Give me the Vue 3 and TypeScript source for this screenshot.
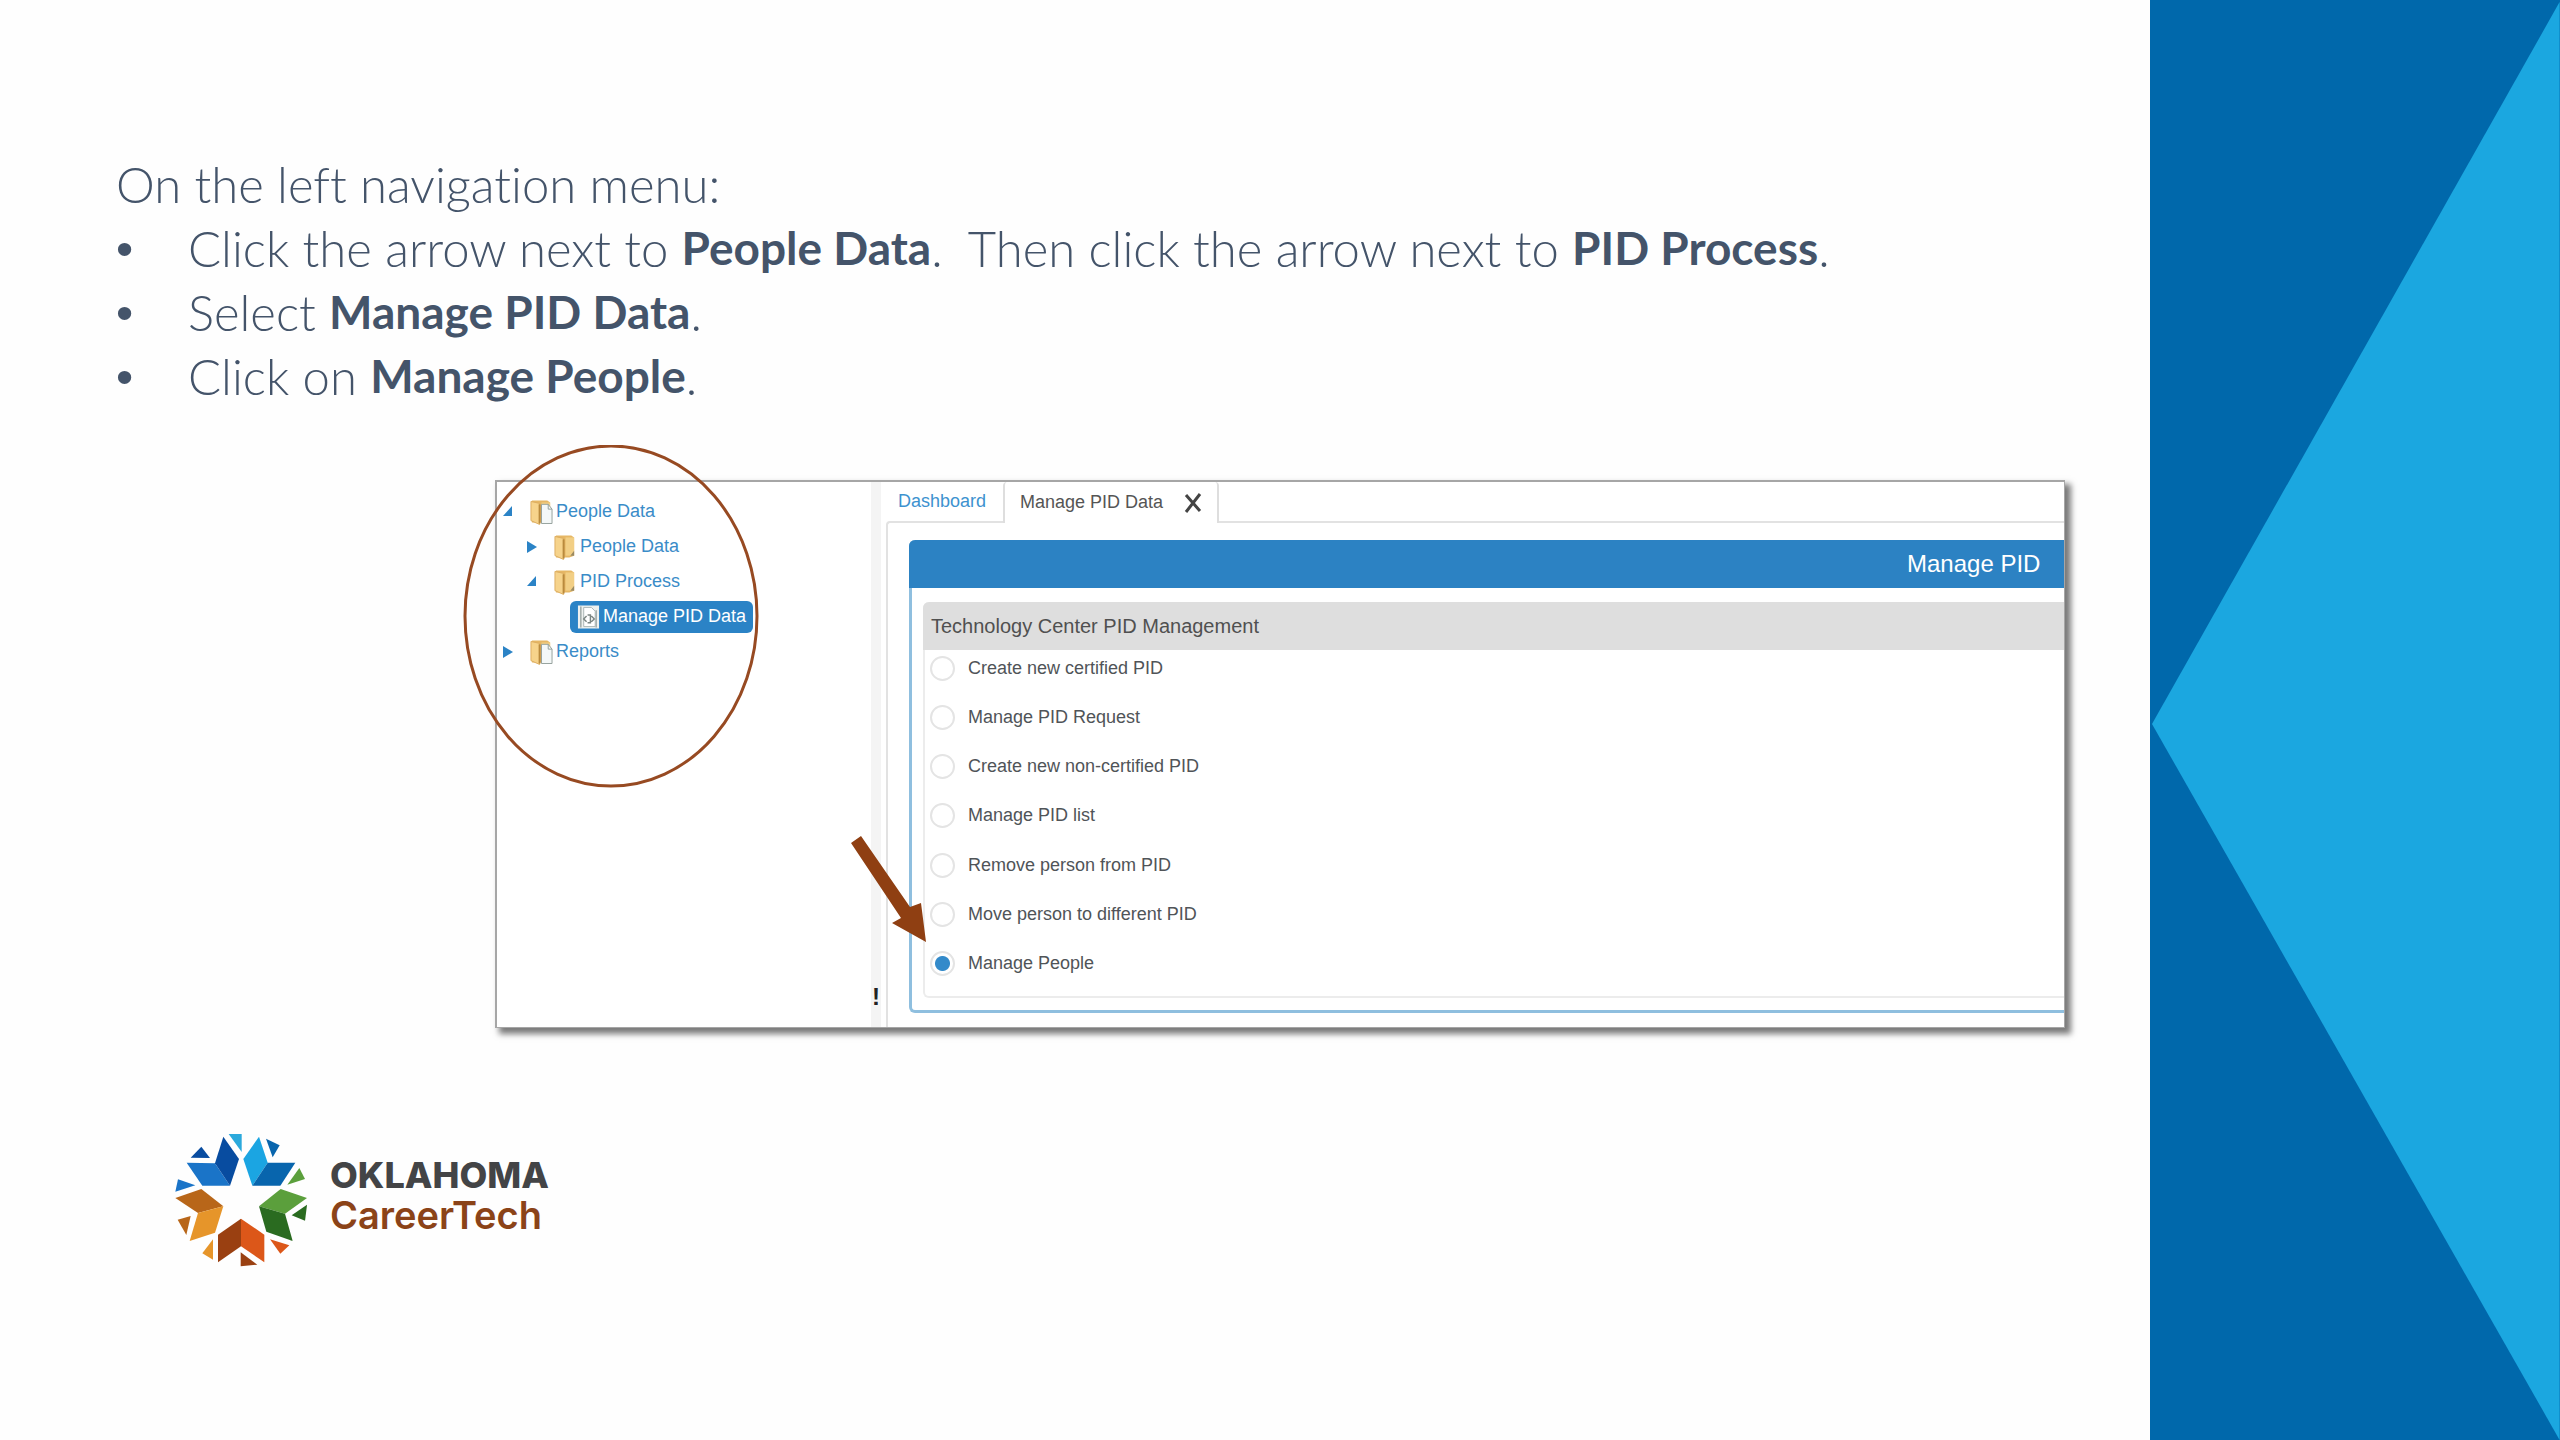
<script setup lang="ts">
import { ref } from 'vue'

interface TreeNode {
  label: string
  level: number
  icon: 'folderPage' | 'folder' | 'page'
  state: 'open' | 'closed' | 'leaf'
}

const nodes: TreeNode[] = [
  { label: 'People Data', level: 0, icon: 'folderPage', state: 'open' },
  { label: 'People Data', level: 1, icon: 'folder', state: 'closed' },
  { label: 'PID Process', level: 1, icon: 'folder', state: 'open' },
  { label: 'Manage PID Data', level: 2, icon: 'page', state: 'leaf' },
  { label: 'Reports', level: 0, icon: 'folderPage', state: 'closed' },
]

const options: string[] = [
  'Create new certified PID',
  'Manage PID Request',
  'Create new non-certified PID',
  'Manage PID list',
  'Remove person from PID',
  'Move person to different PID',
  'Manage People',
]

const selected = ref<string>('Manage People')
</script>

<template>
  <div class="slide">
    <main class="content">
      <section class="steps">
        <p>On the left navigation menu:</p>
        <ul>
          <li>Click the arrow next to <b>People Data</b>.&nbsp; Then click the arrow next to <b>PID Process</b>.</li>
          <li>Select <b>Manage PID Data</b>.</li>
          <li>Click on <b>Manage People</b>.</li>
        </ul>
      </section>

      <figure class="shot">
        <nav class="tree">
          <a
            v-for="(node, i) in nodes"
            :key="i"
            href="#"
            class="node"
            :class="['level-' + node.level, { active: node.state === 'leaf' }]"
          >
            <svg v-if="node.state !== 'leaf'" class="arrow" viewBox="0 0 10 12" aria-hidden="true">
              <path v-if="node.state === 'open'" d="M9 0V10H0Z" />
              <path v-else d="M0 0L10 6L0 12Z" />
            </svg>
            <span class="pill">
              <svg class="icon" viewBox="0 0 24 26" aria-hidden="true">
                <template v-if="node.icon === 'page'">
                  <rect x="1" y="1" width="22" height="24" fill="#eef1ef" />
                  <path d="M4 2V24M20 6V24" stroke="#9fa8a6" stroke-width="1.5" />
                  <path d="M7 3H15L19 7V23H7Z" fill="#fff" stroke="#a9b5b5" />
                  <path d="M10 12L7 15L10 18M15 12L18 15L15 18M11 11H14V19H11" fill="none" stroke="#7c8683" stroke-width="1.5" />
                </template>
                <template v-else>
                  <path d="M2 1H18L21 3V22L16 24H2Z" fill="#e6b765" />
                  <path d="M12 3H21V22H12Z" fill="#f2cf85" />
                  <path d="M1 2L10 4V26L1 22Z" fill="#f6d38b" stroke="#dcae60" />
                  <path d="M10 5V25" stroke="#b98a3d" stroke-width="2" />
                  <path v-if="node.icon === 'folder'" d="M17 22L21 17V22Z" fill="#9a8a62" />
                  <path v-else d="M12 5H19L23 10V25H12Z" fill="#f4f8f8" stroke="#93a09c" />
                  <path v-if="node.icon === 'folderPage'" d="M19 5V10H23" fill="none" stroke="#93a09c" />
                </template>
              </svg>
              <span>{{ node.label }}</span>
            </span>
          </a>
        </nav>

        <div class="splitter">!</div>

        <div class="workspace">
          <div class="tabs">
            <button type="button" class="tab">Dashboard</button>
            <button type="button" class="tab current">
              Manage PID Data
              <svg viewBox="0 0 18 20" aria-hidden="true">
                <path d="M2 2L16 18M16 1L2 19" stroke="#444" stroke-width="3" />
              </svg>
            </button>
          </div>
          <div class="panel">
            <div class="card">
              <h2>Manage PID</h2>
              <div class="group">
                <h3 id="group-title">Technology Center PID Management</h3>
                <div class="options" role="radiogroup" aria-labelledby="group-title">
                  <label v-for="option in options" :key="option">
                    <input v-model="selected" type="radio" name="task" :value="option" />
                    <span>{{ option }}</span>
                  </label>
                </div>
              </div>
            </div>
          </div>
        </div>

        <svg class="ring" viewBox="0 0 296 344" aria-hidden="true">
          <ellipse cx="148" cy="171" rx="146" ry="170" fill="none" stroke="#974a22" stroke-width="3" />
        </svg>
        <svg class="pointer" viewBox="0 0 76 107" aria-hidden="true">
          <path d="M1 7L11 0L60 71L71 67L76 106L42 87L51 82Z" fill="#8f3f12" />
        </svg>
      </figure>

      <footer class="brand">
        <svg viewBox="0 0 480 480" aria-hidden="true">
          <path d="M80 131L165 133L210 200H127Z" fill="#1a74c8" />
          <path d="M190 53L237 120L210 200L165 133Z" fill="#084ca0" />
          <path d="M297 53L323 131L277 200L250 120Z" fill="#1ba5e2" />
          <path d="M323 131H406L361 200H277Z" fill="#0865ad" />
          <path d="M124 83L150 117L92 116Z" fill="#084ca0" />
          <path d="M206 45H245V99Z" fill="#2ba9dc" />
          <path d="M318 59L359 79L338 115Z" fill="#0865ad" />
          <path d="M418 147L435 180L382 197Z" fill="#5b9f3c" />
          <path d="M54 181L106 199L46 218Z" fill="#1a74c8" />
          <path d="M124 210L190 262L114 282L46 237Z" fill="#b86619" />
          <path d="M190 262L165 341L89 366L114 282Z" fill="#e6952a" />
          <path d="M362 210L441 237L375 284L297 262Z" fill="#5b9f3c" />
          <path d="M297 262L375 284L398 366L319 338Z" fill="#2a6b20" />
          <path d="M92 291L79 348L53 302Z" fill="#b86619" />
          <path d="M441 257L435 305L395 289Z" fill="#2a6b20" />
          <path d="M243 299V382L174 430V347Z" fill="#9a4011" />
          <path d="M243 299L313 347V430L243 382Z" fill="#dc5719" />
          <path d="M159 361V422L127 403Z" fill="#e6952a" />
          <path d="M330 361L388 379L361 404Z" fill="#dc5719" />
          <path d="M242 400L292 437L242 442Z" fill="#9a4011" />
        </svg>
        <div class="wordmark">
          <strong>OKLAHOMA</strong>
          <span>CareerTech</span>
        </div>
      </footer>
    </main>

    <aside class="side">
      <svg viewBox="0 0 410 1440" preserveAspectRatio="none" aria-hidden="true">
        <path d="M410 2V1440L2 724Z" fill="#1ba7e0" />
      </svg>
    </aside>
  </div>
</template>

<style>
body {
  margin: 0;
  background: #fefefe;
}
</style>

<style scoped>
.slide {
  display: flex;
  min-height: 100vh;
  font-family: 'Liberation Sans', Arial, sans-serif;
}

.content {
  flex: 1;
  min-width: 0;
  padding-top: 152px;
}

.side {
  width: 16%;
  display: flex;
  background: #0068ab;
}

.side svg {
  width: 100%;
  height: 100vh;
}

.steps {
  padding-left: 116px;
  font-family: Lato, sans-serif;
  font-size: 49px;
  font-weight: 300;
  font-variant-ligatures: none;
  line-height: 64px;
  color: #44546a;
}

.steps p,
.steps ul {
  margin: 0;
  padding: 0;
}

.steps ul {
  list-style: none;
}

.steps li {
  display: flex;
  white-space: pre;
}

.steps li::before {
  content: '•';
  width: 72px;
  font-family: 'Liberation Sans', Arial, sans-serif;
}

.steps b {
  font-size: 46px;
  font-weight: 700;
}

.shot {
  position: relative;
  display: flex;
  margin: 72px 85px 0 495px;
  border: 2px solid #a6a6a6;
  border-right-width: 1px;
  border-bottom-width: 1px;
  background: #fff;
  box-shadow: 5px 5px 6px 1px #7a7a7a;
  font-size: 18px;
}

.tree {
  width: 374px;
  padding-top: 12px;
}

.node {
  display: flex;
  align-items: center;
  height: 35px;
  color: #3a8cc8;
  text-decoration: none;
}

.level-0 {
  padding-left: 6px;
}

.level-1 {
  padding-left: 30px;
}

.level-2 {
  padding-left: 73px;
}

.arrow {
  width: 10px;
  height: 12px;
  margin-right: 10px;
  fill: #2b83c6;
}

.pill {
  display: flex;
  align-items: center;
  gap: 3px;
  height: 32px;
  padding: 0 7px;
  border-radius: 6px;
}

.active .pill {
  background: #2b83c6;
  color: #fff;
}

.icon {
  width: 23px;
  height: 26px;
}

.splitter {
  display: flex;
  align-items: flex-end;
  justify-content: center;
  width: 10px;
  padding-bottom: 16px;
  background: #f4f4f4;
  color: #222;
  font-size: 24px;
  font-weight: 700;
}

.workspace {
  flex: 1;
  min-width: 0;
  padding-left: 5px;
}

.tabs {
  display: flex;
  height: 39px;
}

.tab {
  width: 117px;
  padding: 0 0 0 12px;
  border: 0;
  background: none;
  color: #3d92cf;
  font: inherit;
  text-align: left;
}

.current {
  position: relative;
  display: flex;
  align-items: center;
  justify-content: space-between;
  width: 216px;
  height: 41px;
  padding: 0 15px;
  border: 2px solid #dedede;
  border-width: 0 2px;
  border-radius: 4px 4px 0 0;
  background: #fff;
  color: #555;
}

.current svg {
  width: 18px;
  height: 20px;
}

.panel {
  padding: 17px 0 14px 21px;
  border: 2px solid #e2e2e2;
  border-width: 2px 0 0 2px;
  border-radius: 4px 0 0 0;
}

.card {
  padding-bottom: 12px;
  border: 3px solid #8fbfdf;
  border-width: 0 0 3px 3px;
  border-radius: 6px 0 0 6px;
}

.card h2 {
  margin: 0 0 14px -3px;
  padding-right: 24px;
  border-radius: 6px 0 0 0;
  background: #2c82c3;
  color: #fff;
  font-size: 24px;
  font-weight: 400;
  line-height: 48px;
  text-align: right;
}

.group {
  margin-left: 11px;
  border: 2px solid #ececec;
  border-width: 0 0 2px 2px;
  border-radius: 6px 0 0 6px;
}

.group h3 {
  margin: 0 0 0 -2px;
  padding-left: 8px;
  border-radius: 6px 0 0 0;
  background: #dedede;
  color: #505050;
  font-size: 20px;
  font-weight: 400;
  line-height: 48px;
}

.options {
  display: flex;
  flex-direction: column;
  justify-content: space-between;
  min-height: 332px;
  padding: 0 0 14px 5px;
}

.options label {
  display: flex;
  align-items: center;
  gap: 13px;
  height: 36px;
  color: #505458;
}

.options input {
  appearance: none;
  width: 25px;
  height: 25px;
  margin: 0;
  border: 2px solid #e4e4e4;
  border-radius: 50%;
  background: #fff;
}

.options input:checked {
  background: radial-gradient(circle, #338aca 7px, #fff 8px);
}

.ring {
  position: absolute;
  top: -37px;
  left: -34px;
  width: 296px;
  height: 344px;
}

.pointer {
  position: absolute;
  top: 354px;
  left: 353px;
  width: 76px;
  height: 107px;
}

.brand {
  display: flex;
  align-items: center;
  margin: 91px 0 0 160px;
}

.brand svg {
  width: 160px;
  height: 160px;
}

.wordmark {
  display: flex;
  flex-direction: column;
  margin: 0 0 8px 10px;
  color: #8b4318;
  font-family: Inter, sans-serif;
  font-size: 38px;
  font-weight: 600;
  line-height: 40px;
}

.wordmark strong {
  color: #434446;
  font-size: 36px;
  font-weight: 800;
}
</style>
